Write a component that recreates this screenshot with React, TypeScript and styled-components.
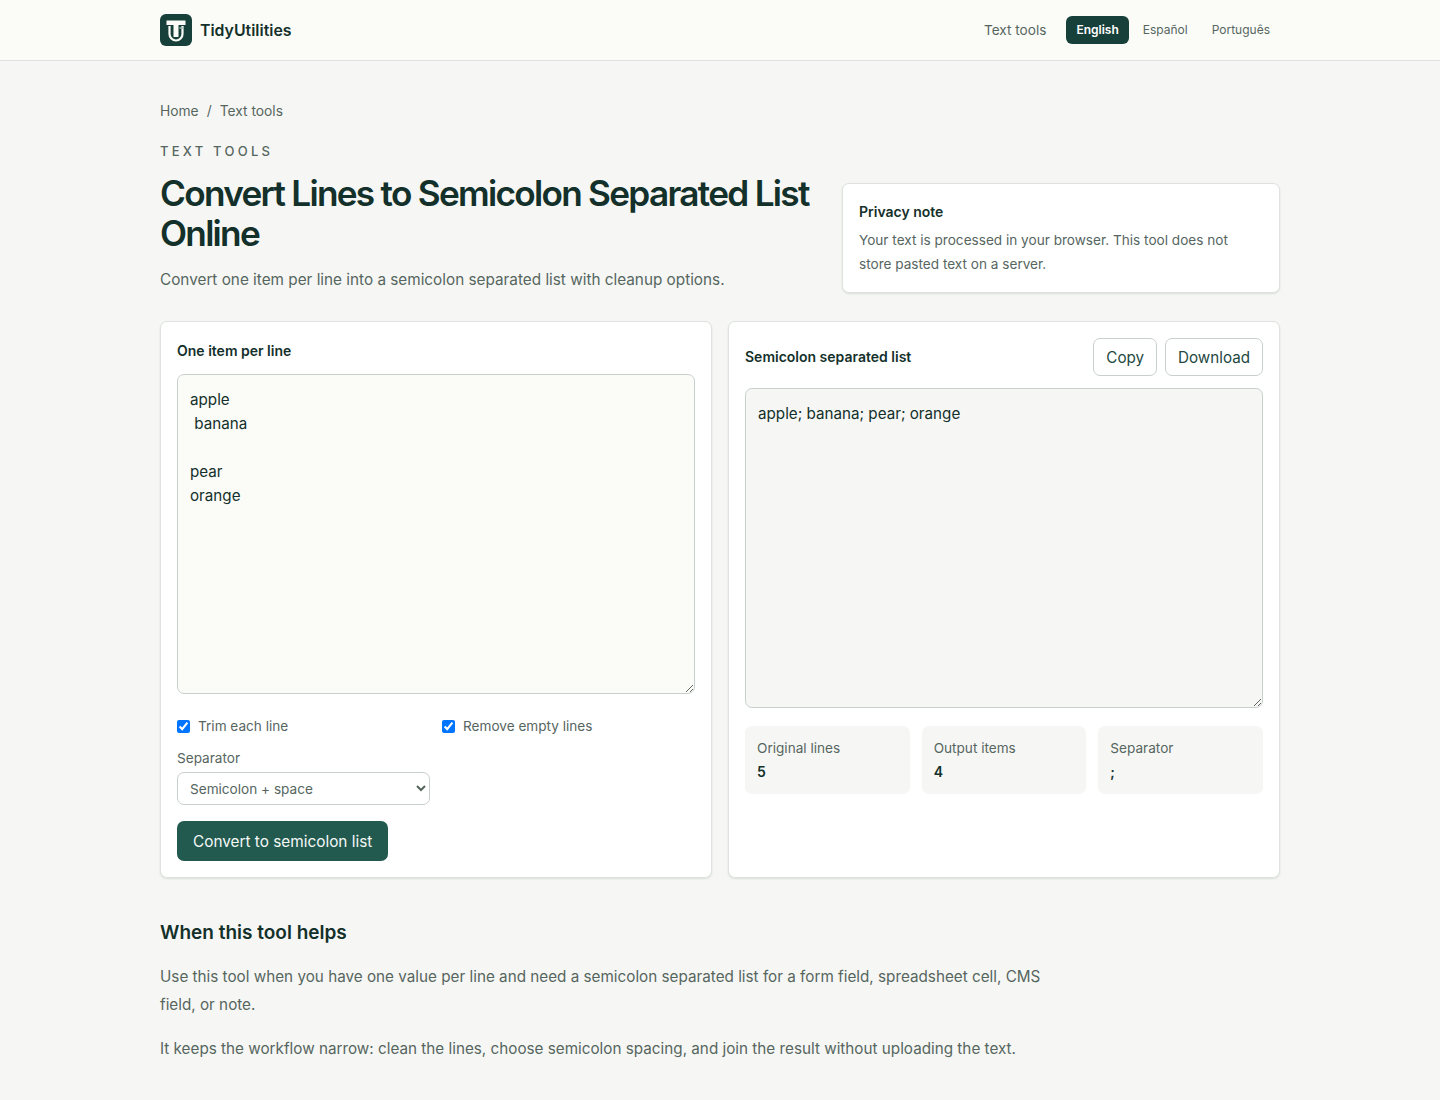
import React from "react";
import styled, { createGlobalStyle } from "styled-components";

const GlobalStyle = createGlobalStyle`
  * { box-sizing: border-box; }
  body {
    margin: 0;
    background: #f6f7f5;
    color: #14302a;
    font-family: Inter, "Liberation Sans", sans-serif;
  }
`;

const Header = styled.header`
  height: 61px;
  background: #fbfcf8;
  border-bottom: 1px solid #dfe3e0;
`;

const HeaderInner = styled.div`
  width: 1120px;
  height: 60px;
  margin: 0 auto;
  display: flex;
  align-items: center;
  justify-content: space-between;
`;

const Brand = styled.a`
  display: flex;
  align-items: center;
  gap: 8px;
  font-size: 15.85px;
  font-weight: 600;
  color: #14302a;
`;

const Nav = styled.nav`
  display: flex;
  align-items: center;
  margin-right: -2px;
`;

const NavLink = styled.a`
  font-size: 13.6px;
  padding-bottom: 1px;
  color: #56665f;
  margin-right: 20px;
`;

const LangLink = styled.a<{ $active?: boolean }>`
  height: 28px;
  margin-right: ${(p) => (p.$active ? "2px" : "0")};
  padding: 0 ${(p) => (p.$active ? "10px" : "12px")} 1px;
  display: flex;
  align-items: center;
  border-radius: 6px;
  font-size: 12px;
  font-weight: ${(p) => (p.$active ? 600 : 400)};
  color: ${(p) => (p.$active ? "#ffffff" : "#56665f")};
  background: ${(p) => (p.$active ? "#17403a" : "transparent")};
`;

const Main = styled.main`
  width: 1120px;
  margin: 0 auto;
  padding-top: 40px;
`;

const Breadcrumb = styled.div`
  display: flex;
  gap: 8px;
  font-size: 13.8px;
  line-height: 21px;
  color: #56665f;
`;

const Hero = styled.section`
  display: grid;
  grid-template-columns: 1fr 438px;
  gap: 16px;
  align-items: end;
  margin-top: 19px;
`;

const HeroText = styled.div`
  padding-bottom: 1px;
`;

const Eyebrow = styled.div`
  font-size: 13px;
  line-height: 20px;
  font-weight: 500;
  letter-spacing: 0.25em;
  color: #56665f;
`;

const Title = styled.h1`
  margin: 12px 0 0;
  font-size: 35.2px;
  line-height: 40px;
  font-weight: 600;
  letter-spacing: -1.72px;
  color: #14302a;
`;

const Lead = styled.p`
  margin: 15px 0 0;
  font-size: 15.3px;
  line-height: 24px;
  color: #56665f;
`;

const Card = styled.div`
  background: #ffffff;
  border: 1px solid #dfe3e0;
  border-radius: 7px;
  box-shadow: 0 1px 2px rgba(20, 48, 42, 0.12);
`;

const NoteCard = styled(Card)`
  padding: 16px;
  height: 110px;
`;

const NoteTitle = styled.div`
  font-size: 14px;
  line-height: 24px;
  font-weight: 600;
`;

const NoteText = styled.p`
  margin: 4px 0 0;
  font-size: 13.6px;
  line-height: 24px;
  color: #56665f;
`;

const Panels = styled.section`
  display: grid;
  grid-template-columns: 1fr 1fr;
  gap: 16px;
  margin-top: 28px;
`;

const Panel = styled(Card)`
  height: 557px;
  padding: 16px;
`;

const PanelLabel = styled.label`
  display: block;
  font-size: 14px;
  line-height: 21px;
  font-weight: 600;
  color: #14302a;
`;

const InputLabel = styled(PanelLabel)`
  margin-top: 2px;
`;

const OutputLabel = styled(PanelLabel)`
  margin-bottom: 2px;
`;

const OutputHead = styled.div`
  display: flex;
  align-items: center;
  justify-content: space-between;
  height: 38px;
`;

const Actions = styled.div`
  display: flex;
  gap: 8px;
`;

const GhostButton = styled.button`
  height: 38px;
  padding: 0 12px;
  border: 1px solid #c9d0cc;
  border-radius: 7px;
  background: #ffffff;
  font: 400 15.2px Inter, sans-serif;
  color: #24483f;
`;

const TextBox = styled.textarea<{ $output?: boolean }>`
  display: block;
  width: 100%;
  height: 320px;
  margin-top: ${(p) => (p.$output ? "12px" : "13px")};
  padding: 13px 12px 11px;
  border: 1px solid #c9d0cc;
  border-radius: 7px;
  background: ${(p) => (p.$output ? "#f6f7f5" : "#fbfcf8")};
  font: 400 15.2px/24px Inter, sans-serif;
  color: #14302a;
  outline: none;
`;

const Options = styled.div`
  display: grid;
  grid-template-columns: 1fr 1fr;
  column-gap: 12px;
  margin-top: 22px;
`;

const CheckLabel = styled.label`
  display: flex;
  align-items: center;
  gap: 8px;
  font-size: 13.6px;
  line-height: 21px;
  color: #56665f;
`;

const Check = styled.input`
  width: 13px;
  height: 13px;
  margin: 0;
`;

const FieldLabel = styled.label`
  display: block;
  margin-top: 11px;
  font-size: 13.6px;
  line-height: 21px;
  color: #56665f;
`;

const Select = styled.select`
  display: block;
  width: 253px;
  height: 33px;
  margin-top: 3px;
  padding: 0 8px;
  border: 1px solid #c9d0cc;
  border-radius: 7px;
  background: #ffffff;
  font: 400 13.6px Inter, sans-serif;
  color: #56665f;
`;

const PrimaryButton = styled.button`
  display: block;
  height: 40px;
  margin-top: 16px;
  padding: 0 16px;
  border: none;
  border-radius: 7px;
  background: #235a50;
  color: #f4f8f5;
  font: 400 15.35px Inter, sans-serif;
`;

const Stats = styled.div`
  display: grid;
  grid-template-columns: repeat(3, 1fr);
  gap: 12px;
  margin-top: 18px;
`;

const Stat = styled.div`
  height: 68px;
  padding: 12px;
  border-radius: 7px;
  background: #f6f7f5;
`;

const StatLabel = styled.div`
  font-size: 13.6px;
  line-height: 21px;
  color: #56665f;
`;

const StatValue = styled.div`
  margin-top: 2px;
  font-size: 14px;
  line-height: 21px;
  font-weight: 600;
  color: #14302a;
`;

const Article = styled.section`
  max-width: 896px;
  margin-top: 41px;
`;

const Heading = styled.h2`
  margin: 0;
  font-size: 19px;
  line-height: 28px;
  font-weight: 600;
  color: #14302a;
`;

const Body = styled.p`
  margin: 16px 0 0;
  font-size: 15.25px;
  line-height: 28px;
  color: #56665f;
`;

function Logo() {
  return (
    <svg width="32" height="32" viewBox="0 0 32 32">
      <rect width="32" height="32" rx="6" fill="#17403a" />
      <path d="M6.5 6.5h19v4.5h-7v12h-5V11h-7z" fill="#fbfcf8" />
      <path d="M9.5 12v8a6.5 6.5 0 0 0 13 0v-8" fill="none" stroke="#fbfcf8" strokeWidth="2.2" />
      <path d="M19.5 14h3.5" stroke="#a9b8b2" strokeWidth="1.5" />
    </svg>
  );
}

export default function App() {
  return (
    <>
      <GlobalStyle />
      <Header>
        <HeaderInner>
          <Brand>
            <Logo />
            TidyUtilities
          </Brand>
          <Nav>
            <NavLink>Text tools</NavLink>
            <LangLink $active>English</LangLink>
            <LangLink>Español</LangLink>
            <LangLink>Português</LangLink>
          </Nav>
        </HeaderInner>
      </Header>
      <Main>
        <Breadcrumb>
          <span>Home</span>
          <span>/</span>
          <span>Text tools</span>
        </Breadcrumb>
        <Hero>
          <HeroText>
            <Eyebrow>TEXT TOOLS</Eyebrow>
            <Title>Convert Lines to Semicolon Separated List Online</Title>
            <Lead>Convert one item per line into a semicolon separated list with cleanup options.</Lead>
          </HeroText>
          <NoteCard>
            <NoteTitle>Privacy note</NoteTitle>
            <NoteText>Your text is processed in your browser. This tool does not store pasted text on a server.</NoteText>
          </NoteCard>
        </Hero>
        <Panels>
          <Panel>
            <InputLabel htmlFor="input">One item per line</InputLabel>
            <TextBox id="input" defaultValue={"apple\n banana\n\npear\norange"} />
            <Options>
              <CheckLabel>
                <Check type="checkbox" defaultChecked />
                Trim each line
              </CheckLabel>
              <CheckLabel>
                <Check type="checkbox" defaultChecked />
                Remove empty lines
              </CheckLabel>
            </Options>
            <FieldLabel htmlFor="separator">Separator</FieldLabel>
            <Select id="separator" defaultValue="semi-space">
              <option value="semi-space">Semicolon + space</option>
              <option value="semi">Semicolon</option>
            </Select>
            <PrimaryButton>Convert to semicolon list</PrimaryButton>
          </Panel>
          <Panel>
            <OutputHead>
              <OutputLabel htmlFor="output">Semicolon separated list</OutputLabel>
              <Actions>
                <GhostButton>Copy</GhostButton>
                <GhostButton>Download</GhostButton>
              </Actions>
            </OutputHead>
            <TextBox id="output" $output readOnly defaultValue="apple; banana; pear; orange" />
            <Stats>
              <Stat>
                <StatLabel>Original lines</StatLabel>
                <StatValue>5</StatValue>
              </Stat>
              <Stat>
                <StatLabel>Output items</StatLabel>
                <StatValue>4</StatValue>
              </Stat>
              <Stat>
                <StatLabel>Separator</StatLabel>
                <StatValue>;</StatValue>
              </Stat>
            </Stats>
          </Panel>
        </Panels>
        <Article>
          <Heading>When this tool helps</Heading>
          <Body>Use this tool when you have one value per line and need a semicolon separated list for a form field, spreadsheet cell, CMS field, or note.</Body>
          <Body>It keeps the workflow narrow: clean the lines, choose semicolon spacing, and join the result without uploading the text.</Body>
        </Article>
      </Main>
    </>
  );
}
